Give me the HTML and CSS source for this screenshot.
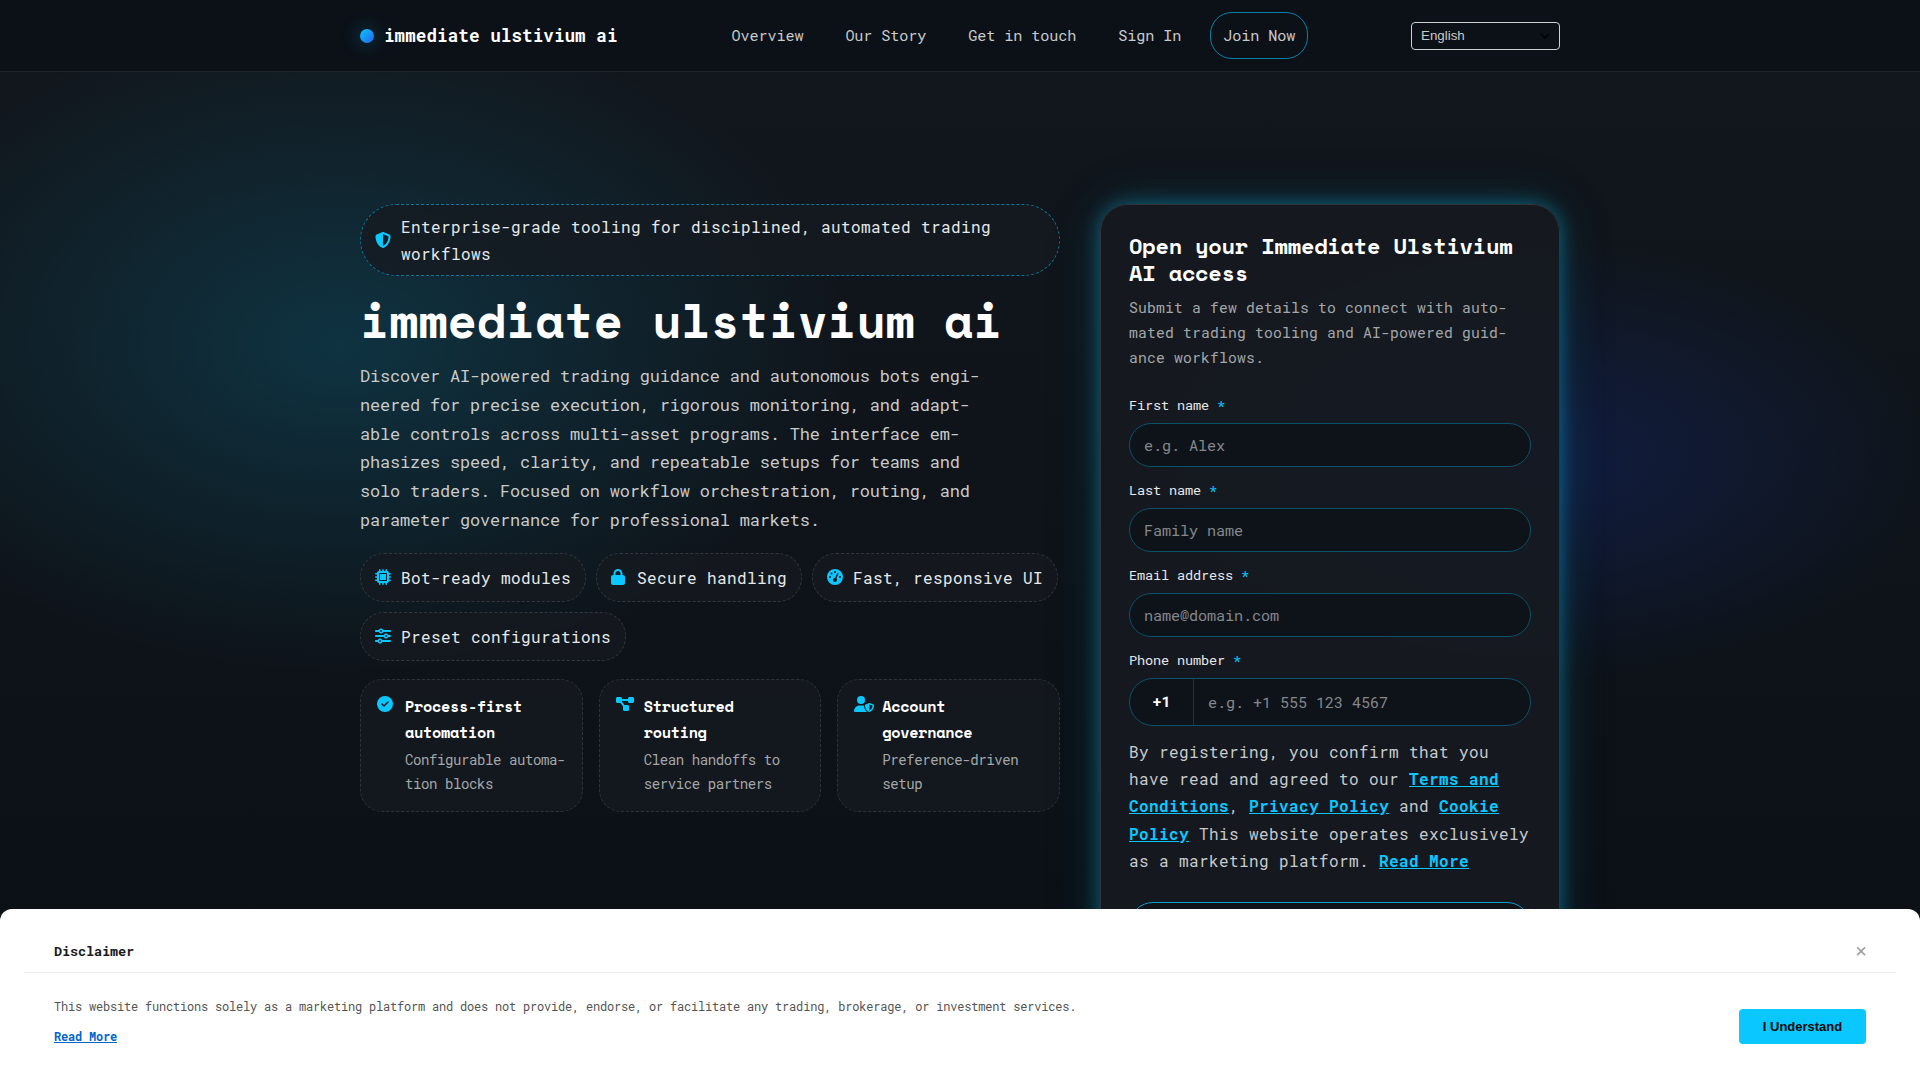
FILE: index.html
```
<!DOCTYPE html>
<html lang="en">
<head>
    <meta charset="UTF-8">
    <meta name="viewport" content="width=device-width, initial-scale=1.0">
    <title>immediate ulstivium ai</title>
    <link rel="stylesheet" href="styles.css">
</head>
<body>
    <header class="site-header">
        <div class="container header-inner">
            <a href="#" class="brand"><span class="brand-dot"></span>immediate ulstivium ai</a>
            <nav class="nav">
                <a href="#">Overview</a>
                <a href="#">Our Story</a>
                <a href="#">Get in touch</a>
                <a href="#">Sign In</a>
                <a href="#" class="nav-cta">Join Now</a>
            </nav>
            <button class="lang" type="button">English
                <svg width="10" height="6" viewBox="0 0 10 6"><path d="M1 1l4 4 4-4" fill="none" stroke="#000" stroke-width="1.5"/></svg>
            </button>
        </div>
    </header>

    <main class="hero">
        <div class="container hero-grid">
            <section class="hero-copy">
                <div class="badge">
                    <svg class="icon" viewBox="0 0 512 512"><path d="M256 0c4.600 0 9.200 1 13.400 2.900L457.700 82.800c22 9.300 38.400 31 38.300 57.200-.5 99.200-41.300 280.700-213.600 363.200-16.700 8-36.100 8-52.800 0C57.300 420.700 16.500 239.200 16 140c-.1-26.200 16.300-47.900 38.300-57.200L242.700 2.900C246.800 1 251.400 0 256 0zm0 66.800V444.800C394 378 431.100 230.100 432 141.400L256 66.800z"/></svg>
                    <span>Enterprise-grade tooling for disciplined, automated trading workflows</span>
                </div>
                <h1>immediate ulstivium ai</h1>
                <p class="lead">Discover AI-powered trading guidance and autonomous bots engi-<br>neered for precise execution, rigorous monitoring, and adapt-<br>able controls across multi-asset programs. The interface em-<br>phasizes speed, clarity, and repeatable setups for teams and<br>solo traders. Focused on workflow orchestration, routing, and<br>parameter governance for professional markets.</p>

                <div class="chips">
                    <span class="chip">
                        <svg class="icon" viewBox="0 0 512 512"><path d="M176 24c0-13.300-10.700-24-24-24s-24 10.700-24 24v40c-35.300 0-64 28.700-64 64H24c-13.300 0-24 10.700-24 24s10.700 24 24 24h40v56H24c-13.300 0-24 10.700-24 24s10.700 24 24 24h40v56H24c-13.300 0-24 10.700-24 24s10.700 24 24 24h40c0 35.300 28.700 64 64 64v40c0 13.300 10.700 24 24 24s24-10.700 24-24v-40h56v40c0 13.300 10.700 24 24 24s24-10.700 24-24v-40h56v40c0 13.300 10.700 24 24 24s24-10.700 24-24v-40c35.300 0 64-28.700 64-64h40c13.300 0 24-10.700 24-24s-10.700-24-24-24h-40v-56h40c13.300 0 24-10.700 24-24s-10.700-24-24-24h-40v-56h40c13.300 0 24-10.700 24-24s-10.700-24-24-24h-40c0-35.300-28.700-64-64-64V24c0-13.300-10.700-24-24-24s-24 10.700-24 24v40h-56V24c0-13.300-10.700-24-24-24s-24 10.700-24 24v40h-56V24zM160 128h192c17.700 0 32 14.300 32 32v192c0 17.700-14.300 32-32 32H160c-17.700 0-32-14.300-32-32V160c0-17.700 14.300-32 32-32zm192 32H160v192h192V160z"/></svg>
                        Bot-ready modules
                    </span>
                    <span class="chip">
                        <svg class="icon" viewBox="0 0 512 512"><path d="M144 144v48h160v-48c0-44.200-35.800-80-80-80s-80 35.800-80 80zM80 192v-48C80 64.500 144.500 0 224 0s144 64.500 144 144v48h16c35.300 0 64 28.700 64 64v192c0 35.300-28.700 64-64 64H64c-35.300 0-64-28.700-64-64V256c0-35.300 28.700-64 64-64h16z"/></svg>
                        Secure handling
                    </span>
                    <span class="chip">
                        <svg class="icon" viewBox="0 0 512 512"><path d="M0 256a256 256 0 1 1 512 0A256 256 0 1 1 0 256zM288 96a32 32 0 1 0-64 0 32 32 0 1 0 64 0zM256 416c35.300 0 64-28.700 64-64 0-17.400-6.900-33.100-18.100-44.600L366 161.700c5.300-12.100-.2-26.300-12.300-31.600s-26.300.2-31.600 12.300L257.900 288H256c-35.300 0-64 28.700-64 64s28.700 64 64 64zM176 144a32 32 0 1 0-64 0 32 32 0 1 0 64 0zM96 288a32 32 0 1 0 0-64 32 32 0 1 0 0 64zM448 256a32 32 0 1 0-64 0 32 32 0 1 0 64 0z"/></svg>
                        Fast, responsive UI
                    </span>
                    <span class="chip">
                        <svg class="icon" viewBox="0 0 512 512"><path d="M0 416c0 17.700 14.300 32 32 32h54.700c12.300 28.300 40.500 48 73.300 48s61-19.700 73.300-48H480c17.700 0 32-14.300 32-32s-14.300-32-32-32H233.300c-12.300-28.300-40.500-48-73.300-48s-61 19.700-73.300 48H32c-17.700 0-32 14.300-32 32zm128 0a32 32 0 1 1 64 0 32 32 0 1 1-64 0zM320 256a32 32 0 1 1 64 0 32 32 0 1 1-64 0zm32-80c-32.800 0-61 19.700-73.300 48H32c-17.700 0-32 14.300-32 32s14.300 32 32 32h246.700c12.300 28.300 40.500 48 73.300 48s61-19.700 73.300-48H480c17.700 0 32-14.300 32-32s-14.300-32-32-32h-54.700c-12.300-28.300-40.500-48-73.300-48zM192 128a32 32 0 1 1 0-64 32 32 0 1 1 0 64zm73.300-64C253 35.700 224.800 16 192 16s-61 19.700-73.300 48H32C14.300 64 0 78.300 0 96s14.300 32 32 32h86.700c12.300 28.300 40.500 48 73.300 48s61-19.700 73.300-48H480c17.700 0 32-14.300 32-32s-14.300-32-32-32H265.300z"/></svg>
                        Preset configurations
                    </span>
                </div>

                <div class="features">
                    <div class="feature">
                        <svg class="icon" viewBox="0 0 512 512"><path d="M256 512A256 256 0 1 0 256 0a256 256 0 1 0 0 512zM369 209L241 337c-9.400 9.400-24.600 9.400-33.900 0l-64-64c-9.400-9.400-9.400-24.600 0-33.900s24.600-9.400 33.900 0l47 47L335 175c9.400-9.400 24.600-9.400 33.900 0s9.400 24.600 0 33.900z"/></svg>
                        <div>
                            <h3>Process-first<br>automation</h3>
                            <p>Configurable automa-<br>tion blocks</p>
                        </div>
                    </div>
                    <div class="feature">
                        <svg class="icon" viewBox="0 0 512 512"><path d="M0 80c0-26.500 21.500-48 48-48h96c26.500 0 48 21.500 48 48v16h192V80c0-26.500 21.500-48 48-48h96c26.500 0 48 21.500 48 48v96c0 26.500-21.500 48-48 48h-96c-26.500 0-48-21.500-48-48v-16H192v16c0 1.700-.1 3.400-.3 5L272 288h96c26.500 0 48 21.500 48 48v96c0 26.500-21.500 48-48 48h-96c-26.500 0-48-21.500-48-48v-96c0-1.700.1-3.400.3-5L144 224H48c-26.500 0-48-21.500-48-48V80z"/></svg>
                        <div>
                            <h3>Structured<br>routing</h3>
                            <p>Clean handoffs to<br>service partners</p>
                        </div>
                    </div>
                    <div class="feature">
                        <svg class="icon" viewBox="0 0 512 512"><path d="M224 256a128 128 0 1 0 0-256 128 128 0 1 0 0 256zm-45.700 48C79.800 304 0 383.800 0 482.300 0 498.700 13.300 512 29.700 512h388.600c1.800 0 3.500-.2 5.300-.5-76.300-55.100-99.800-141-103.100-200.200-16.100-4.800-33.100-7.300-50.700-7.300h-91.500zm308.800-78.300l-120 48C358 277.400 352 286.200 352 296c0 63.300 25.900 168.800 134.800 214.200 5.900 2.500 12.600 2.500 18.500 0C614.100 464.800 640 359.300 640 296c0-9.800-6-18.600-15.100-22.300l-120-48c-5.700-2.300-12.100-2.300-17.800 0zM591.400 312c-3.900 50.700-27.200 116.700-95.400 149.700V273.800L591.400 312z"/></svg>
                        <div>
                            <h3>Account<br>governance</h3>
                            <p>Preference-driven<br>setup</p>
                        </div>
                    </div>
                </div>
            </section>

            <aside class="form-card">
                <h2>Open your Immediate Ulstivium AI access</h2>
                <p class="form-sub">Submit a few details to connect with auto-<br>mated trading tooling and AI-powered guid-<br>ance workflows.</p>
                <form>
                    <div class="field">
                        <label for="first">First name <span class="req">*</span></label>
                        <input id="first" type="text" placeholder="e.g. Alex">
                    </div>
                    <div class="field">
                        <label for="last">Last name <span class="req">*</span></label>
                        <input id="last" type="text" placeholder="Family name">
                    </div>
                    <div class="field">
                        <label for="email">Email address <span class="req">*</span></label>
                        <input id="email" type="email" placeholder="name@domain.com">
                    </div>
                    <div class="field">
                        <label for="phone">Phone number <span class="req">*</span></label>
                        <div class="phone">
                            <span class="prefix">+1</span>
                            <input id="phone" type="tel" placeholder="e.g. +1 555 123 4567">
                        </div>
                    </div>
                    <p class="consent">By registering, you confirm that you have read and agreed to our <a href="#">Terms and Conditions</a>, <a href="#">Privacy Policy</a> and <a href="#">Cookie Policy</a> This website operates exclusively as a marketing platform. <a href="#">Read More</a></p>
                    <button class="submit" type="button"></button>
                </form>
            </aside>
        </div>
    </main>

    <div class="disclaimer">
        <div class="disclaimer-head">
            <strong>Disclaimer</strong>
            <button class="close" type="button">×</button>
        </div>
        <div class="disclaimer-body">
            <div class="disclaimer-text">
                <p>This website functions solely as a marketing platform and does not provide, endorse, or facilitate any trading, brokerage, or investment services.</p>
                <a href="#">Read More</a>
            </div>
            <button class="accept" type="button">I Understand</button>
        </div>
    </div>
</body>
</html>
```
FILE: styles.css
```
:root {
    --cyan: #0ac8ff;
    --panel: rgba(22, 26, 32, 0.78);
    --body-font: "Roboto Mono", "DejaVu Sans Mono", monospace;
    --head-font: "Space Mono", "DejaVu Sans Mono", monospace;
}
* {
    box-sizing: border-box;
}
body {
    margin: 0;
    height: 1080px;
    overflow: hidden;
    font-family: var(--body-font);
    font-size: 16px;
    line-height: 1.7;
    color: #e7e8e9;
    background:
        radial-gradient(ellipse 510px 330px at 340px 345px, rgba(10, 200, 255, 0.17), transparent),
        radial-gradient(ellipse 400px 220px at 1540px 462px, rgba(24, 70, 240, 0.18), transparent),
        linear-gradient(#12171d, #0c1117 85%);
}
h1, h2, h3, p {
    margin: 0;
}
.container {
    width: 1200px;
    margin: 0 auto;
}
.site-header {
    height: 72px;
    background: #0c1118;
    border-bottom: 1px solid #20252b;
}
.header-inner {
    height: 71px;
    display: flex;
    align-items: center;
    justify-content: space-between;
}
.brand {
    display: flex;
    align-items: center;
    gap: 10px;
    color: #fff;
    font-weight: 700;
    font-size: 17.6px;
    text-decoration: none;
    letter-spacing: 0.06px;
}
.brand-dot {
    width: 14px;
    height: 14px;
    border-radius: 50%;
    background: linear-gradient(135deg, #0ac8ff, #2563eb);
    box-shadow: 0 0 18px rgba(10, 200, 255, 0.35);
}
.nav {
    display: flex;
    gap: 16px;
    margin-right: 2px;
}
.nav a {
    padding: 9.6px 12px;
    border: 1px solid transparent;
    border-radius: 22px;
    color: #c8cacc;
    font-size: 15.2px;
    line-height: 25.8px;
    letter-spacing: -0.12px;
    text-decoration: none;
}
.nav .nav-cta {
    border-color: #0880a5;
}
.lang {
    display: flex;
    align-items: center;
    justify-content: space-between;
    width: 149px;
    height: 28px;
    padding: 0 9px;
    background: transparent;
    border: 1px solid #cfd0d1;
    border-radius: 4px;
    color: #c8cacc;
    font: 13.333px "Liberation Sans", Arial, sans-serif;
}
.hero {
    padding-top: 132px;
}
.hero-grid {
    display: grid;
    grid-template-columns: 700px 460px;
    justify-content: space-between;
    align-items: start;
}
.icon {
    width: 16px;
    height: 16px;
    flex: none;
    overflow: visible;
    fill: var(--cyan);
}
.badge, .chip {
    display: flex;
    align-items: center;
    gap: 10px;
    border: 1px dashed #32373d;
    background: var(--panel);
    letter-spacing: 0.4px;
}
.badge {
    height: 72px;
    padding: 0 14px;
    border-color: #08799b;
    border-radius: 36px;
}
h1 {
    height: 86px;
    padding-top: 15px;
    font-family: var(--head-font);
    font-size: 48px;
    line-height: 58px;
    letter-spacing: -0.18px;
    color: #fff;
}
.lead {
    color: #c8cacc;
    font-size: 16.96px;
    line-height: 28.8px;
    letter-spacing: -0.17px;
    white-space: nowrap;
}
.chips {
    display: flex;
    flex-wrap: wrap;
    gap: 10px;
    margin-top: 18.5px;
}
.chip {
    height: 49px;
    padding: 0 14px;
    border-radius: 24px;
    white-space: nowrap;
}
.chip .icon {
    margin-bottom: 1px;
}
.features {
    display: grid;
    grid-template-columns: repeat(3, 1fr);
    gap: 16px;
    margin-top: 18px;
}
.feature {
    display: flex;
    gap: 12px;
    height: 133px;
    padding: 16px 13px 0 16px;
    border: 1px dashed #2e3339;
    border-radius: 22px;
    background: var(--panel);
}
.feature h3 {
    margin-top: -3px;
    color: #fff;
    font-family: var(--head-font);
    font-size: 15.2px;
    line-height: 26px;
    letter-spacing: -0.3px;
}
.feature p {
    margin-top: 3px;
    color: #a4a7a9;
    font-size: 14.08px;
    line-height: 24px;
    letter-spacing: -0.45px;
    white-space: nowrap;
}
.form-card {
    height: 800px;
    padding: 27px 28px;
    border: 1px solid #30353a;
    border-radius: 28px;
    background: rgba(22, 26, 32, 0.9);
    box-shadow: 0 0 18px rgba(10, 200, 255, 0.4), 0 0 48px rgba(10, 200, 255, 0.16), 0 0 60px rgba(0, 0, 0, 0.15);
}
.form-card h2 {
    color: #fff;
    font-family: var(--head-font);
    font-size: 22px;
    line-height: 27px;
    letter-spacing: -0.24px;
}
.form-sub {
    margin-top: 9px;
    color: #a4a7a9;
    font-size: 14.72px;
    line-height: 25px;
    letter-spacing: 0.17px;
    white-space: nowrap;
}
form {
    padding-top: 24px;
}
.field {
    margin-bottom: 12.5px;
}
.field label {
    display: block;
    height: 29px;
    line-height: 22px;
    font-size: 13.6px;
    letter-spacing: -0.16px;
    color: #e7e8e9;
}
.req {
    color: var(--cyan);
}
.field input {
    display: block;
    width: 100%;
    height: 43.5px;
    padding: 0 14px;
    border: 1px solid #0b5167;
    border-radius: 22px;
    background: #0e131a;
    color: #fff;
    font: 15.2px var(--body-font);
    letter-spacing: -0.12px;
    outline: none;
}
.field input::placeholder {
    color: #84878b;
}
.phone {
    display: flex;
    height: 47.5px;
    border: 1px solid #0b5167;
    border-radius: 24px;
    background: #0e131a;
    overflow: hidden;
}
.prefix {
    flex: none;
    width: 64px;
    border-right: 1px solid #2b3036;
    text-align: center;
    color: #fff;
    font-weight: 700;
    font-size: 15.2px;
    line-height: 45px;
    letter-spacing: -0.12px;
}
.phone input {
    height: 100%;
    border: 0;
    background: none;
}
.consent {
    margin-top: 0.8px;
    color: #c8cacc;
    letter-spacing: 0.4px;
    line-height: 27.2px;
}
.consent a {
    color: var(--cyan);
    font-weight: 700;
}
.submit {
    display: block;
    width: 100%;
    height: 52px;
    margin-top: 27.5px;
    border: 1px solid #0a9dc6;
    border-radius: 24px;
    background: #0e131a;
}
.disclaimer {
    position: fixed;
    left: 0;
    right: 0;
    bottom: 0;
    height: 171px;
    padding: 20px 24px;
    border-radius: 12px 12px 0 0;
    background: #fff;
}
.disclaimer-head {
    display: flex;
    align-items: center;
    justify-content: space-between;
    height: 44px;
    padding: 2px 29px 0 30px;
    border-bottom: 1px solid #eee;
    color: #1a1a1a;
    font-size: 13.6px;
    letter-spacing: -0.16px;
}
.close {
    padding: 0;
    border: 0;
    background: none;
    color: #999;
    font: 20px "Liberation Sans", Arial, sans-serif;
}
.disclaimer-body {
    display: flex;
    justify-content: space-between;
    padding: 21px 30px 0;
    font-size: 12px;
    letter-spacing: -0.2px;
}
.disclaimer-text {
    color: #555;
}
.disclaimer-text p {
    line-height: 24px;
}
.disclaimer-text a {
    display: block;
    margin-top: 6px;
    line-height: 24px;
    color: #06c;
    font-weight: 700;
}
.accept {
    width: 127px;
    height: 35px;
    margin-top: 15px;
    border: 0;
    border-radius: 4px;
    background: var(--cyan);
    color: #0a0a0a;
    font: bold 13px "Liberation Sans", Arial, sans-serif;
}
```
